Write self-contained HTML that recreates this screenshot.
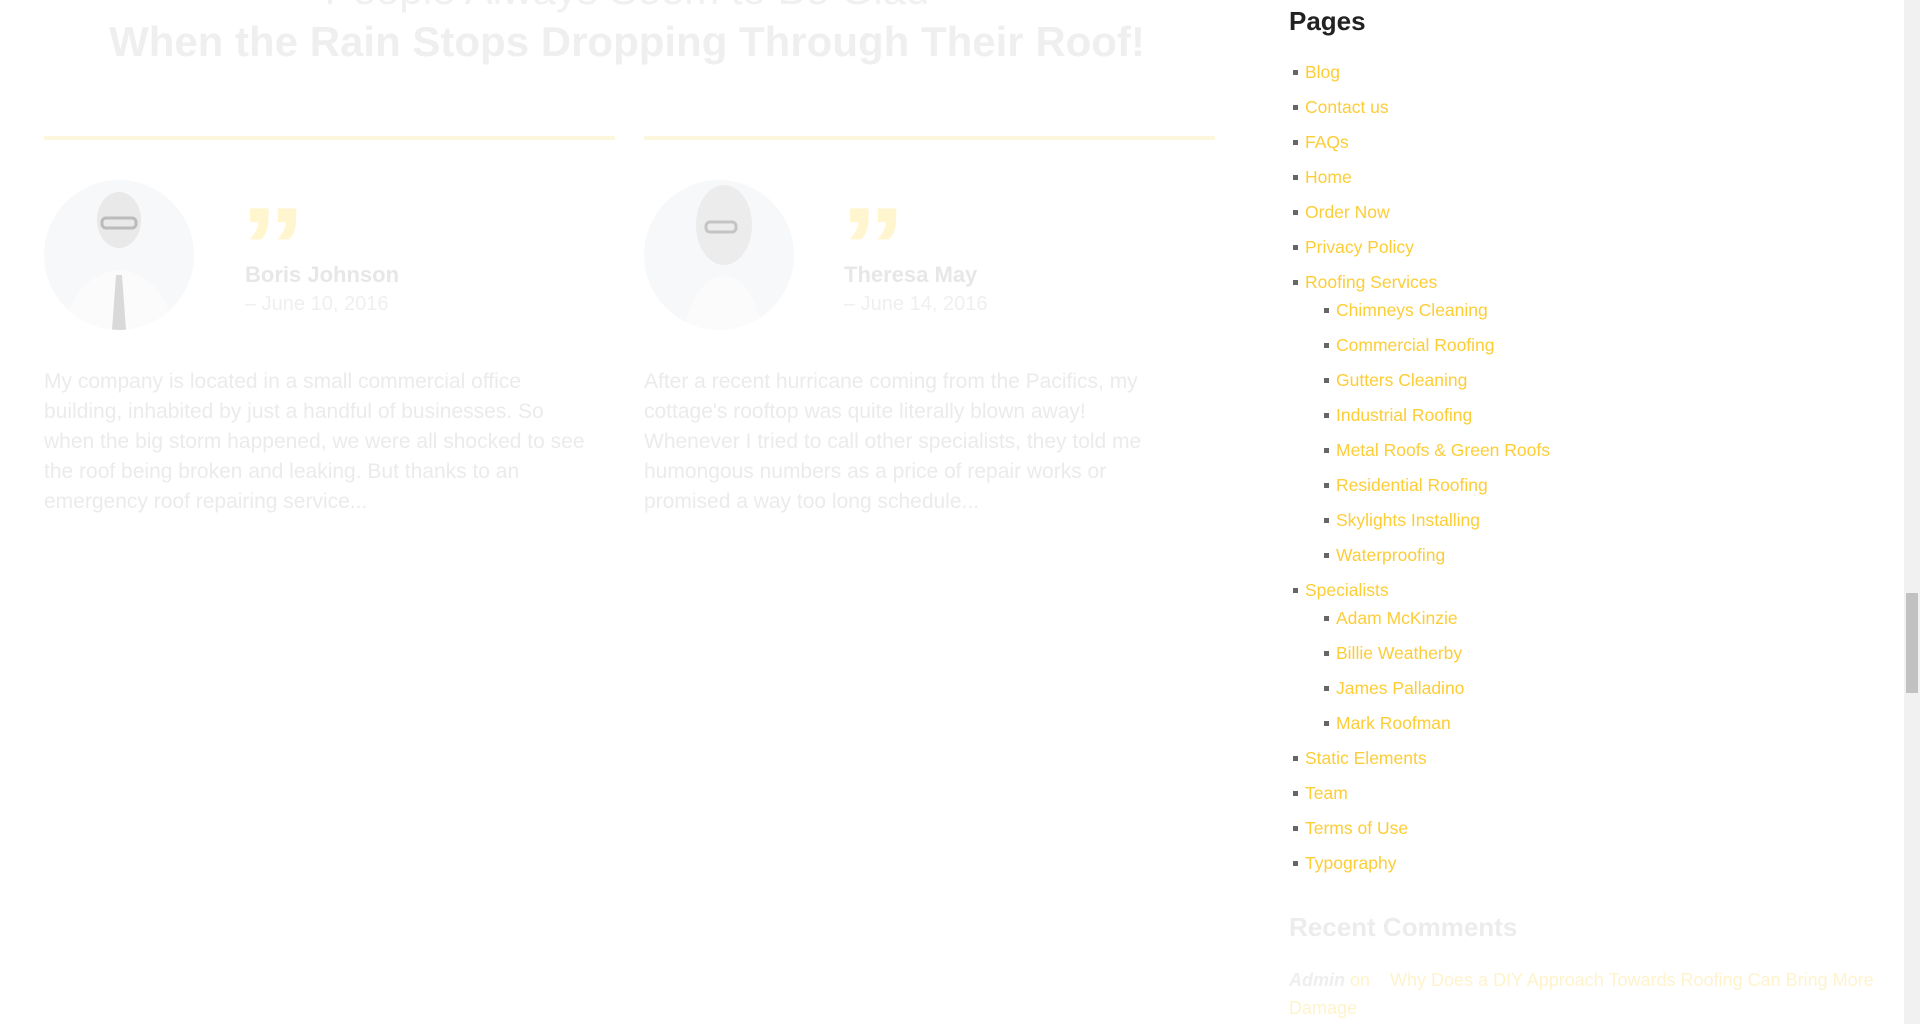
<!DOCTYPE html>
<html><head><meta charset="utf-8"><style>
*{margin:0;padding:0;box-sizing:border-box}
body{width:1920px;height:1024px;overflow:hidden;background:#fff;font-family:"Liberation Sans",sans-serif;position:relative}
.a{position:absolute;white-space:nowrap}
.t{color:#efefef;font-weight:bold;font-size:42px;left:0;width:1254px;text-align:center}
.line{position:absolute;top:136px;height:4px;background:#fdf7de}
.av{position:absolute;top:180px;width:150px;height:150px;border-radius:50%;background:#f7f8fa;overflow:hidden}
.q{position:absolute;top:192px;color:#fff5cf;font-size:110px;font-weight:bold;line-height:110px;font-family:"Liberation Sans",sans-serif;transform:scaleX(1.2);transform-origin:left}
.nm{color:#e7e7e7;font-weight:bold;font-size:22px}
.dt{color:#efefef;font-size:20px}
.p{color:#ebebeb;font-size:21px;line-height:30px}
.li{position:absolute;font-size:17.5px;color:#fdcd36;line-height:20px}
.li:before{content:"";position:absolute;left:-12px;top:8px;width:5px;height:5px;background:#666}
</style></head><body>
<div class="a t" style="top:-34px;font-weight:normal;color:#f0f0f0">People Always Seem to Be Glad</div>
<div class="a t" style="top:18px">When the Rain Stops Dropping Through Their Roof!</div>
<div class="line" style="left:44px;width:571px"></div>
<div class="line" style="left:644px;width:571px"></div>

<div class="av" style="left:44px"><svg width="150" height="150"><ellipse cx="75" cy="40" rx="22" ry="28" fill="#e9e9e9"/><rect x="58" y="38" width="34" height="10" rx="4" fill="none" stroke="#bbb" stroke-width="3"/><path d="M20 150 Q30 95 75 90 Q120 95 130 150Z" fill="#fbfbfb"/><path d="M72 95 L78 95 L82 150 L68 150Z" fill="#d9d9d9"/></svg></div>
<div class="av" style="left:644px"><svg width="150" height="150"><ellipse cx="80" cy="45" rx="28" ry="40" fill="#ececec"/><rect x="62" y="42" width="30" height="10" rx="4" fill="none" stroke="#c4c4c4" stroke-width="3"/><path d="M40 150 Q50 100 80 95 Q110 100 118 150Z" fill="#fbfbfb"/></svg></div>

<div class="q" style="left:240px">”</div>
<div class="q" style="left:840px">”</div>
<div class="a nm" style="left:245px;top:262px">Boris Johnson</div>
<div class="a dt" style="left:245px;top:293px">– June 10, 2016</div>
<div class="a nm" style="left:844px;top:262px">Theresa May</div>
<div class="a dt" style="left:844px;top:293px">– June 14, 2016</div>
<div class="a p" style="left:44px;top:367px">My company is located in a small commercial office<br>building, inhabited by just a handful of businesses. So<br>when the big storm happened, we were all shocked to see<br>the roof being broken and leaking. But thanks to an<br>emergency roof repairing service...</div>
<div class="a p" style="left:644px;top:367px">After a recent hurricane coming from the Pacifics, my<br>cottage's rooftop was quite literally blown away!<br>Whenever I tried to call other specialists, they told me<br>humongous numbers as a price of repair works or<br>promised a way too long schedule...</div>

<div class="a" style="left:1289px;top:6px;font-size:26px;font-weight:bold;color:#222">Pages</div>
<div class="li" style="left:1305px;top:62px">Blog</div>
<div class="li" style="left:1305px;top:97px">Contact us</div>
<div class="li" style="left:1305px;top:132px">FAQs</div>
<div class="li" style="left:1305px;top:167px">Home</div>
<div class="li" style="left:1305px;top:202px">Order Now</div>
<div class="li" style="left:1305px;top:237px">Privacy Policy</div>
<div class="li" style="left:1305px;top:272px">Roofing Services</div>
<div class="li" style="left:1336px;top:300px">Chimneys Cleaning</div>
<div class="li" style="left:1336px;top:335px">Commercial Roofing</div>
<div class="li" style="left:1336px;top:370px">Gutters Cleaning</div>
<div class="li" style="left:1336px;top:405px">Industrial Roofing</div>
<div class="li" style="left:1336px;top:440px">Metal Roofs &amp; Green Roofs</div>
<div class="li" style="left:1336px;top:475px">Residential Roofing</div>
<div class="li" style="left:1336px;top:510px">Skylights Installing</div>
<div class="li" style="left:1336px;top:545px">Waterproofing</div>
<div class="li" style="left:1305px;top:580px">Specialists</div>
<div class="li" style="left:1336px;top:608px">Adam McKinzie</div>
<div class="li" style="left:1336px;top:643px">Billie Weatherby</div>
<div class="li" style="left:1336px;top:678px">James Palladino</div>
<div class="li" style="left:1336px;top:713px">Mark Roofman</div>
<div class="li" style="left:1305px;top:748px">Static Elements</div>
<div class="li" style="left:1305px;top:783px">Team</div>
<div class="li" style="left:1305px;top:818px">Terms of Use</div>
<div class="li" style="left:1305px;top:853px">Typography</div>

<div class="a" style="left:1289px;top:912px;font-size:26px;font-weight:bold;color:#ececec">Recent Comments</div>
<div class="a" style="left:1289px;top:970px;font-size:18px;color:#eee"><i><b>Admin</b></i> <span style="color:#fff3cc">on &nbsp; &nbsp;Why Does a DIY Approach Towards Roofing Can Bring More</span></div>
<div class="a" style="left:1289px;top:998px;font-size:18px;color:#fff3cc">Damage</div>

<div style="position:absolute;left:1904px;top:0;width:16px;height:1024px;background:#f1f1f1"></div>
<div style="position:absolute;left:1906px;top:593px;width:12px;height:100px;background:#c1c1c1"></div>
</body></html>
